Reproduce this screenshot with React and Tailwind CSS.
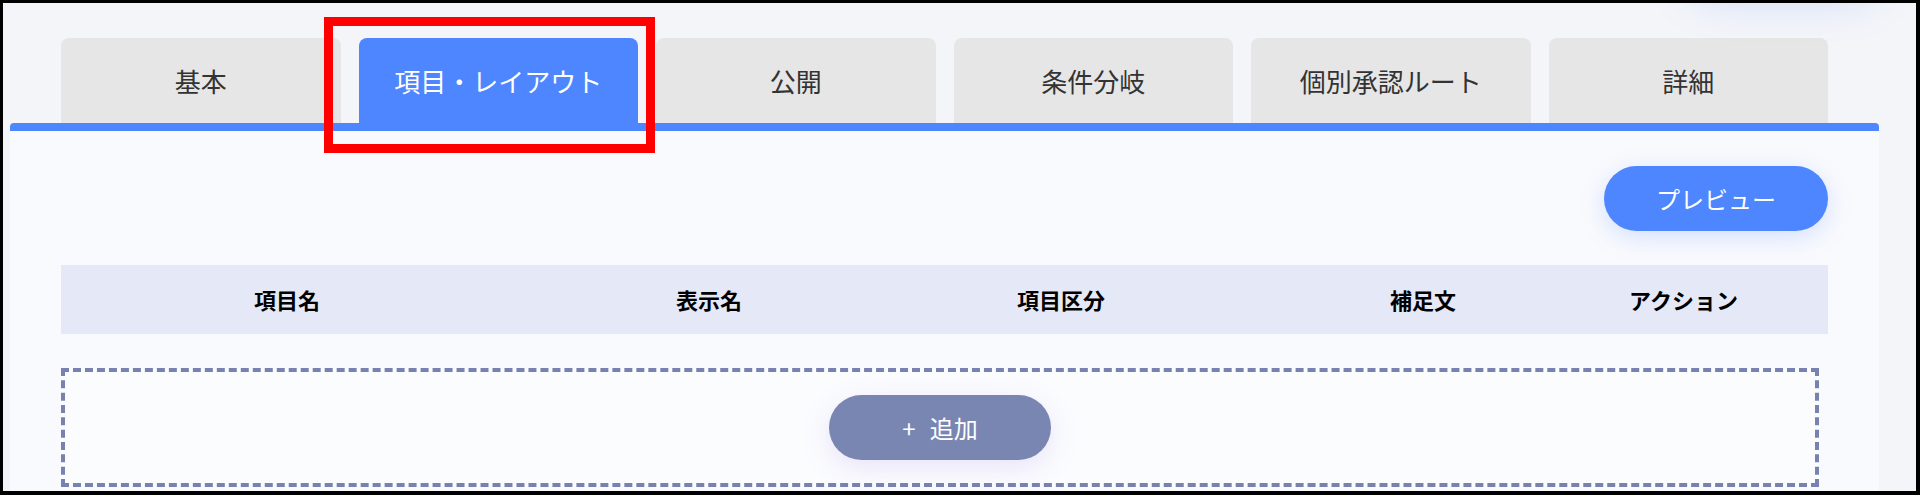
import React from 'react';

const tabs = ['基本', '項目・レイアウト', '公開', '条件分岐', '個別承認ルート', '詳細'];
const columns = ['項目名', '表示名', '項目区分', '補足文', 'アクション'];

const FormSettings = ({ activeIndex = 1 }) => {
  return (
    <div className="relative w-[1920px] h-[497px] bg-white overflow-hidden font-['Noto_Sans_CJK_JP','Noto_Sans',sans-serif]">
      {/* Frame */}
      <div className="h-[495px] border-t-[3px] border-l-[3px] border-r-[4px] border-b-[4px] border-black bg-[#f4f5f9] overflow-hidden relative">
        {/* soft glow top right */}
        <div className="absolute -top-[70px] left-[1680px] w-[200px] h-[70px] rounded-full shadow-[0_0_40px_rgba(77,134,255,0.18)]" />

        <div className="pl-[7px] pt-[35px] w-[1876px]">
          {/* Tabs */}
          <div className="flex gap-[18px] px-[51px] h-[85px]">
            {tabs.map((tab, i) => (
              <button
                key={tab}
                className={
                  i === activeIndex
                    ? 'flex-1 rounded-t-[8px] bg-[#4d86ff] text-white text-[26px] flex items-center justify-center'
                    : 'flex-1 rounded-t-[8px] bg-[#e6e6e6] text-[#333333] text-[26px] flex items-center justify-center'
                }
              >
                {tab}
              </button>
            ))}
          </div>

          {/* Panel */}
          <div className="h-[400px] bg-[#f9fafd] border-t-[8px] border-[#4d86ff] rounded-t-[4px] px-[51px] pt-[35px]">
            <div className="flex justify-end">
              <button className="w-[224px] h-[65px] rounded-full bg-[#4d86ff] text-white text-[24px] shadow-[0_6px_24px_rgba(77,134,255,0.22)]">
                プレビュー
              </button>
            </div>

            <div className="mt-[34px] h-[69px] bg-[#e5e8f6] grid grid-cols-[452px_392px_312px_412px_104px_1fr] items-center text-[22px] font-bold text-black">
              {columns.map((col) => (
                <div key={col} className="text-center whitespace-nowrap">
                  {col}
                </div>
              ))}
            </div>

            <div className="mt-[34px] mr-[9px] h-[119px] border-[4px] border-dashed border-[#7882b0] bg-[#fbfcfe] flex items-center justify-center">
              <button className="w-[222px] h-[65px] rounded-full bg-[#7a86b2] text-white text-[24px] flex items-center justify-center gap-[14px] shadow-[0_8px_28px_rgba(150,120,230,0.18)]">
                <span>+</span>
                <span>追加</span>
              </button>
            </div>
          </div>
        </div>
      </div>

      {/* Annotation */}
      <div className="absolute left-[324px] top-[17px] w-[331px] h-[136px] border-[9px] border-[#ff0000] pointer-events-none" />
    </div>
  );
};

export default function App() {
  return <FormSettings />;
}
